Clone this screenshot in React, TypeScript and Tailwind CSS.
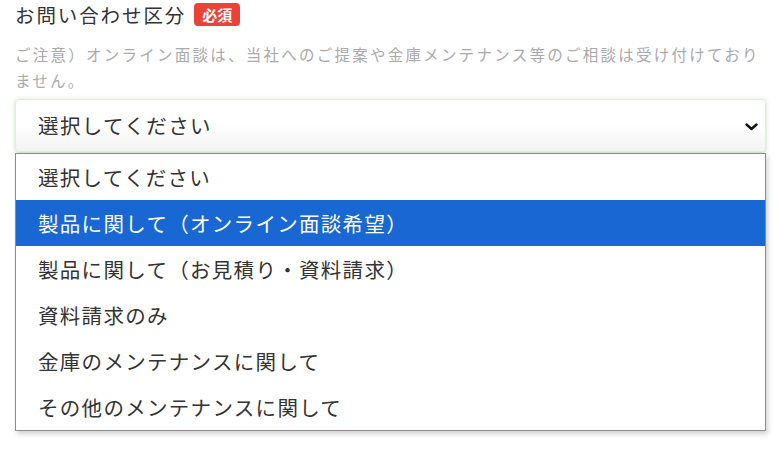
import React, { useState } from 'react';

const options = [
  '選択してください',
  '製品に関して（オンライン面談希望）',
  '製品に関して（お見積り・資料請求）',
  '資料請求のみ',
  '金庫のメンテナンスに関して',
  'その他のメンテナンスに関して',
];

const App: React.FC = () => {
  const [active, setActive] = useState(1);

  return (
    <div
      className="min-h-[450px] w-[780px] bg-white pl-[15px] pt-[3px] text-[#333]"
      style={{ fontFamily: '"Noto Sans CJK JP", "Noto Sans", sans-serif' }}
    >
      <div className="flex h-[23px] items-center gap-[8px]">
        <span className="text-[19.5px] leading-none tracking-[1.9px]">お問い合わせ区分</span>
        <span className="flex h-[23px] w-[46px] items-center justify-center rounded-[4px] bg-[#ea4335] text-[15px] font-bold leading-none text-white">
          必須
        </span>
      </div>

      <p className="mt-[15px] w-[752px] text-[15.5px] leading-[26px] tracking-[2.25px] text-[#aaa]">
        ご注意）オンライン面談は、当社へのご提案や金庫メンテナンス等のご相談は受け付けておりません。
      </p>

      <div className="mt-[6px] w-[751px]">
        <div className="flex h-[53px] items-center justify-between rounded-[4px] border border-[#e3eee3] bg-gradient-to-b from-white via-white to-[#f3f3f3] pl-[22px] pr-[7px] shadow-[0_0_4px_rgba(150,215,150,0.45),0_1px_2px_rgba(0,0,0,0.12)]">
          <span className="text-[20.5px] leading-none tracking-[1.4px]">選択してください</span>
          <svg width="13" height="8" viewBox="0 0 13 8" className="mt-[2px]">
            <polyline points="1.5,1.5 6.5,6 11.5,1.5" fill="none" stroke="#111" strokeWidth="2.4" strokeLinecap="round" strokeLinejoin="round" />
          </svg>
        </div>

        <ul className="mt-px border border-[#8c8c8c] bg-white shadow-[2px_3px_5px_rgba(0,0,0,0.18)]">
          {options.map((opt, i) => (
            <li
              key={opt}
              onMouseEnter={() => setActive(i)}
              className={`flex h-[46px] items-center pl-[22px] text-[20.5px] leading-none tracking-[1.3px] ${
                i === active ? 'bg-[#1967d2] text-white' : 'text-[#333]'
              }`}
            >
              {opt}
            </li>
          ))}
        </ul>
      </div>
    </div>
  );
};

export default App;
